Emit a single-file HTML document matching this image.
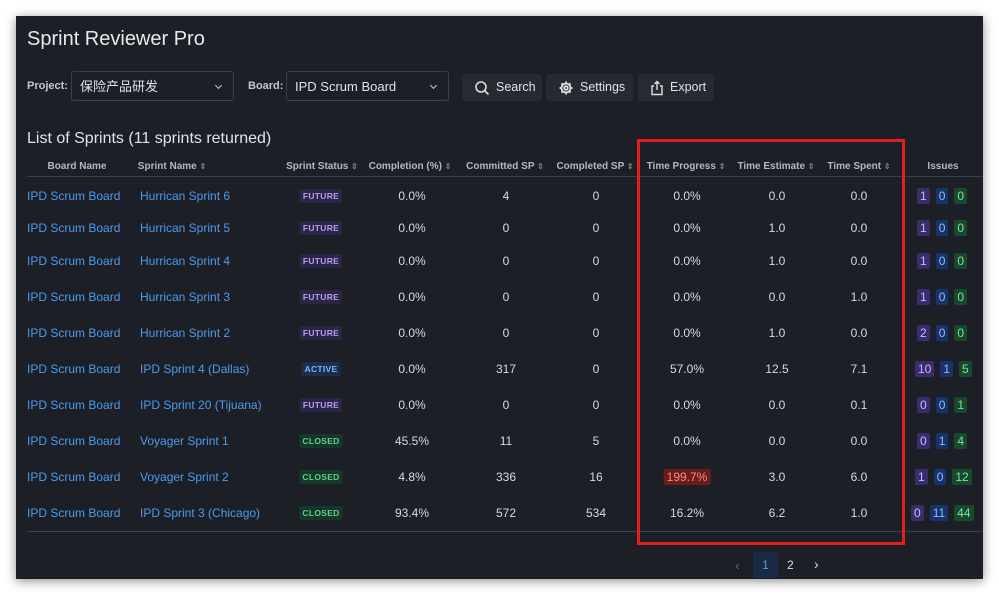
<!DOCTYPE html>
<html><head><meta charset="utf-8"><style>
body{margin:0;width:999px;height:596px;background:#fff;overflow:hidden;font-family:"Liberation Sans","Noto Sans CJK SC",sans-serif;position:relative}
.panel{position:absolute;left:16px;top:16px;width:967px;height:563px;background:#1c2026;box-shadow:0 2px 10px rgba(0,0,0,.45)}
.a{position:absolute;white-space:nowrap}
.t{color:#e6e8eb;font-size:20px;left:27px;top:28px}
.lbl{color:#c4c8ce;font-size:11px;font-weight:bold}
.sel{position:absolute;border:1px solid #3b4048;border-radius:3px;height:30px;top:71px;background:#1c2026;color:#dfe2e6;font-size:13px;line-height:30px;box-sizing:border-box;padding-left:8px}
.sel:after{content:"";position:absolute;right:12px;top:11px;width:4px;height:4px;border-right:1.5px solid #ccc;border-bottom:1.5px solid #ccc;transform:rotate(45deg)}
.btn{position:absolute;top:74px;height:27px;background:#262b32;border-radius:3px;color:#dfe2e6;font-size:12.5px;line-height:27px;box-sizing:border-box;display:flex;align-items:center;gap:6px;padding-left:12px}
.h{color:#b3b8bf;font-size:10px;font-weight:bold;top:161px;transform:translateX(-50%)}
.h i{font-style:normal;color:#777;font-size:8px}
.c{font-size:12px;color:#d7dade;transform:translate(-50%,-50%)}
.l{font-size:12px;color:#4b9bf0;transform:translateY(-50%)}
.st{font-size:8.5px;font-weight:bold;padding:2px 3px;border-radius:2px;transform:translate(-50%,-50%);letter-spacing:.3px}
.F{color:#b49cf0;background:#2c2545}.A{color:#7ab4ff;background:#1b2e4e}.C{color:#5fd08a;background:#16382a}
.iss{transform:translateY(-50%);display:flex;gap:6px;font-size:12px}
.iss span{padding:1px 3px;border-radius:2px;min-width:6px;text-align:center}
.p{background:#3a2d6b;color:#c9b8ff}.b{background:#17336a;color:#8fbaff}.g{background:#19492c;color:#7fe0a0}
.red{background:#6b1d1a;color:#ff8a80;padding:1px 3px;border-radius:2px}
</style></head><body>
<div class="panel"></div>
<div class="a t">Sprint Reviewer Pro</div>
<div class="a lbl" style="left:27px;top:80px">Project:</div>
<div class="sel" style="left:71px;width:163px">保险产品研发</div>
<div class="a lbl" style="left:248px;top:80px">Board:</div>
<div class="sel" style="left:286px;width:163px">IPD Scrum Board</div>
<div class="btn" style="left:462px;width:80px"><svg width="16" height="16" viewBox="0 0 16 16" fill="none" stroke="#ddd" stroke-width="1.6"><circle cx="7" cy="7" r="5"/><path d="M10.5 10.5L14.5 14.5"/></svg>Search</div>
<div class="btn" style="left:546px;width:87px"><svg width="16" height="16" viewBox="0 0 16 16" fill="none" stroke="#ddd" stroke-width="1.8"><circle cx="8" cy="8" r="4.5"/><circle cx="8" cy="8" r="1.8"/><path d="M8 1.5v2M8 12.5v2M1.5 8h2M12.5 8h2M3.4 3.4l1.4 1.4M11.2 11.2l1.4 1.4M3.4 12.6l1.4-1.4M11.2 4.8l1.4-1.4"/></svg>Settings</div>
<div class="btn" style="left:638px;width:76px"><svg width="14" height="16" viewBox="0 0 14 16" fill="none" stroke="#ddd" stroke-width="1.4"><path d="M4 6H2v8.5h10V6h-2M7 10V1.5M4.5 4L7 1.5 9.5 4"/></svg>Export</div>
<div class="a" style="left:27px;top:130px;color:#e0e3e7;font-size:16px">List of Sprints (11 sprints returned)</div>
<div class="a h" style="left:77px">Board Name</div>
<div class="a h" style="left:172px">Sprint Name <i>⇕</i></div>
<div class="a h" style="left:322px">Sprint Status <i>⇕</i></div>
<div class="a h" style="left:410px">Completion (%) <i>⇕</i></div>
<div class="a h" style="left:505px">Committed SP <i>⇕</i></div>
<div class="a h" style="left:595px">Completed SP <i>⇕</i></div>
<div class="a h" style="left:686px">Time Progress <i>⇕</i></div>
<div class="a h" style="left:776px">Time Estimate <i>⇕</i></div>
<div class="a h" style="left:859px">Time Spent <i>⇕</i></div>
<div class="a h" style="left:943px">Issues</div>
<div class="a" style="left:27px;top:176px;width:956px;height:1px;background:#3a3f47"></div>
<div class="a" style="left:27px;top:531px;width:956px;height:1px;background:#3a3f47"></div>

<div id="rows"></div>
<div class="a l" style="left:27px;top:196px">IPD Scrum Board</div><div class="a l" style="left:140px;top:196px">Hurrican Sprint 6</div><div class="a st F" style="left:321px;top:196px">FUTURE</div><div class="a c" style="left:412px;top:196px">0.0%</div><div class="a c" style="left:506px;top:196px">4</div><div class="a c" style="left:596px;top:196px">0</div><div class="a c" style="left:687px;top:196px">0.0%</div><div class="a c" style="left:777px;top:196px">0.0</div><div class="a c" style="left:859px;top:196px">0.0</div><div class="a iss" style="left:917px;top:196px"><span class="p">1</span><span class="b">0</span><span class="g">0</span></div>
<div class="a l" style="left:27px;top:228px">IPD Scrum Board</div><div class="a l" style="left:140px;top:228px">Hurrican Sprint 5</div><div class="a st F" style="left:321px;top:228px">FUTURE</div><div class="a c" style="left:412px;top:228px">0.0%</div><div class="a c" style="left:506px;top:228px">0</div><div class="a c" style="left:596px;top:228px">0</div><div class="a c" style="left:687px;top:228px">0.0%</div><div class="a c" style="left:777px;top:228px">1.0</div><div class="a c" style="left:859px;top:228px">0.0</div><div class="a iss" style="left:917px;top:228px"><span class="p">1</span><span class="b">0</span><span class="g">0</span></div>
<div class="a l" style="left:27px;top:261px">IPD Scrum Board</div><div class="a l" style="left:140px;top:261px">Hurrican Sprint 4</div><div class="a st F" style="left:321px;top:261px">FUTURE</div><div class="a c" style="left:412px;top:261px">0.0%</div><div class="a c" style="left:506px;top:261px">0</div><div class="a c" style="left:596px;top:261px">0</div><div class="a c" style="left:687px;top:261px">0.0%</div><div class="a c" style="left:777px;top:261px">1.0</div><div class="a c" style="left:859px;top:261px">0.0</div><div class="a iss" style="left:917px;top:261px"><span class="p">1</span><span class="b">0</span><span class="g">0</span></div>
<div class="a l" style="left:27px;top:297px">IPD Scrum Board</div><div class="a l" style="left:140px;top:297px">Hurrican Sprint 3</div><div class="a st F" style="left:321px;top:297px">FUTURE</div><div class="a c" style="left:412px;top:297px">0.0%</div><div class="a c" style="left:506px;top:297px">0</div><div class="a c" style="left:596px;top:297px">0</div><div class="a c" style="left:687px;top:297px">0.0%</div><div class="a c" style="left:777px;top:297px">0.0</div><div class="a c" style="left:859px;top:297px">1.0</div><div class="a iss" style="left:917px;top:297px"><span class="p">1</span><span class="b">0</span><span class="g">0</span></div>
<div class="a l" style="left:27px;top:333px">IPD Scrum Board</div><div class="a l" style="left:140px;top:333px">Hurrican Sprint 2</div><div class="a st F" style="left:321px;top:333px">FUTURE</div><div class="a c" style="left:412px;top:333px">0.0%</div><div class="a c" style="left:506px;top:333px">0</div><div class="a c" style="left:596px;top:333px">0</div><div class="a c" style="left:687px;top:333px">0.0%</div><div class="a c" style="left:777px;top:333px">1.0</div><div class="a c" style="left:859px;top:333px">0.0</div><div class="a iss" style="left:917px;top:333px"><span class="p">2</span><span class="b">0</span><span class="g">0</span></div>
<div class="a l" style="left:27px;top:369px">IPD Scrum Board</div><div class="a l" style="left:140px;top:369px">IPD Sprint 4 (Dallas)</div><div class="a st A" style="left:321px;top:369px">ACTIVE</div><div class="a c" style="left:412px;top:369px">0.0%</div><div class="a c" style="left:506px;top:369px">317</div><div class="a c" style="left:596px;top:369px">0</div><div class="a c" style="left:687px;top:369px">57.0%</div><div class="a c" style="left:777px;top:369px">12.5</div><div class="a c" style="left:859px;top:369px">7.1</div><div class="a iss" style="left:915px;top:369px"><span class="p">10</span><span class="b">1</span><span class="g">5</span></div>
<div class="a l" style="left:27px;top:405px">IPD Scrum Board</div><div class="a l" style="left:140px;top:405px">IPD Sprint 20 (Tijuana)</div><div class="a st F" style="left:321px;top:405px">FUTURE</div><div class="a c" style="left:412px;top:405px">0.0%</div><div class="a c" style="left:506px;top:405px">0</div><div class="a c" style="left:596px;top:405px">0</div><div class="a c" style="left:687px;top:405px">0.0%</div><div class="a c" style="left:777px;top:405px">0.0</div><div class="a c" style="left:859px;top:405px">0.1</div><div class="a iss" style="left:917px;top:405px"><span class="p">0</span><span class="b">0</span><span class="g">1</span></div>
<div class="a l" style="left:27px;top:441px">IPD Scrum Board</div><div class="a l" style="left:140px;top:441px">Voyager Sprint 1</div><div class="a st C" style="left:321px;top:441px">CLOSED</div><div class="a c" style="left:412px;top:441px">45.5%</div><div class="a c" style="left:506px;top:441px">11</div><div class="a c" style="left:596px;top:441px">5</div><div class="a c" style="left:687px;top:441px">0.0%</div><div class="a c" style="left:777px;top:441px">0.0</div><div class="a c" style="left:859px;top:441px">0.0</div><div class="a iss" style="left:917px;top:441px"><span class="p">0</span><span class="b">1</span><span class="g">4</span></div>
<div class="a l" style="left:27px;top:477px">IPD Scrum Board</div><div class="a l" style="left:140px;top:477px">Voyager Sprint 2</div><div class="a st C" style="left:321px;top:477px">CLOSED</div><div class="a c" style="left:412px;top:477px">4.8%</div><div class="a c" style="left:506px;top:477px">336</div><div class="a c" style="left:596px;top:477px">16</div><div class="a c" style="left:687px;top:477px"><span class="red">199.7%</span></div><div class="a c" style="left:777px;top:477px">3.0</div><div class="a c" style="left:859px;top:477px">6.0</div><div class="a iss" style="left:915px;top:477px"><span class="p">1</span><span class="b">0</span><span class="g">12</span></div>
<div class="a l" style="left:27px;top:513px">IPD Scrum Board</div><div class="a l" style="left:140px;top:513px">IPD Sprint 3 (Chicago)</div><div class="a st C" style="left:321px;top:513px">CLOSED</div><div class="a c" style="left:412px;top:513px">93.4%</div><div class="a c" style="left:506px;top:513px">572</div><div class="a c" style="left:596px;top:513px">534</div><div class="a c" style="left:687px;top:513px">16.2%</div><div class="a c" style="left:777px;top:513px">6.2</div><div class="a c" style="left:859px;top:513px">1.0</div><div class="a iss" style="left:911px;top:513px"><span class="p">0</span><span class="b">11</span><span class="g">44</span></div>

<div class="a" style="left:637px;top:139px;width:262px;height:400px;border:3px solid #e0201a"></div>

<div class="a" style="left:735px;top:557px;color:#666;font-size:14px">‹</div>
<div class="a" style="left:753px;top:552px;width:25px;height:26px;background:#1a2a44;border-radius:3px;color:#5a9cf0;font-size:12px;text-align:center;line-height:26px">1</div>
<div class="a" style="left:787px;top:558px;color:#ddd;font-size:12px">2</div>
<div class="a" style="left:814px;top:556px;color:#ddd;font-size:14px">›</div>
</body></html>
